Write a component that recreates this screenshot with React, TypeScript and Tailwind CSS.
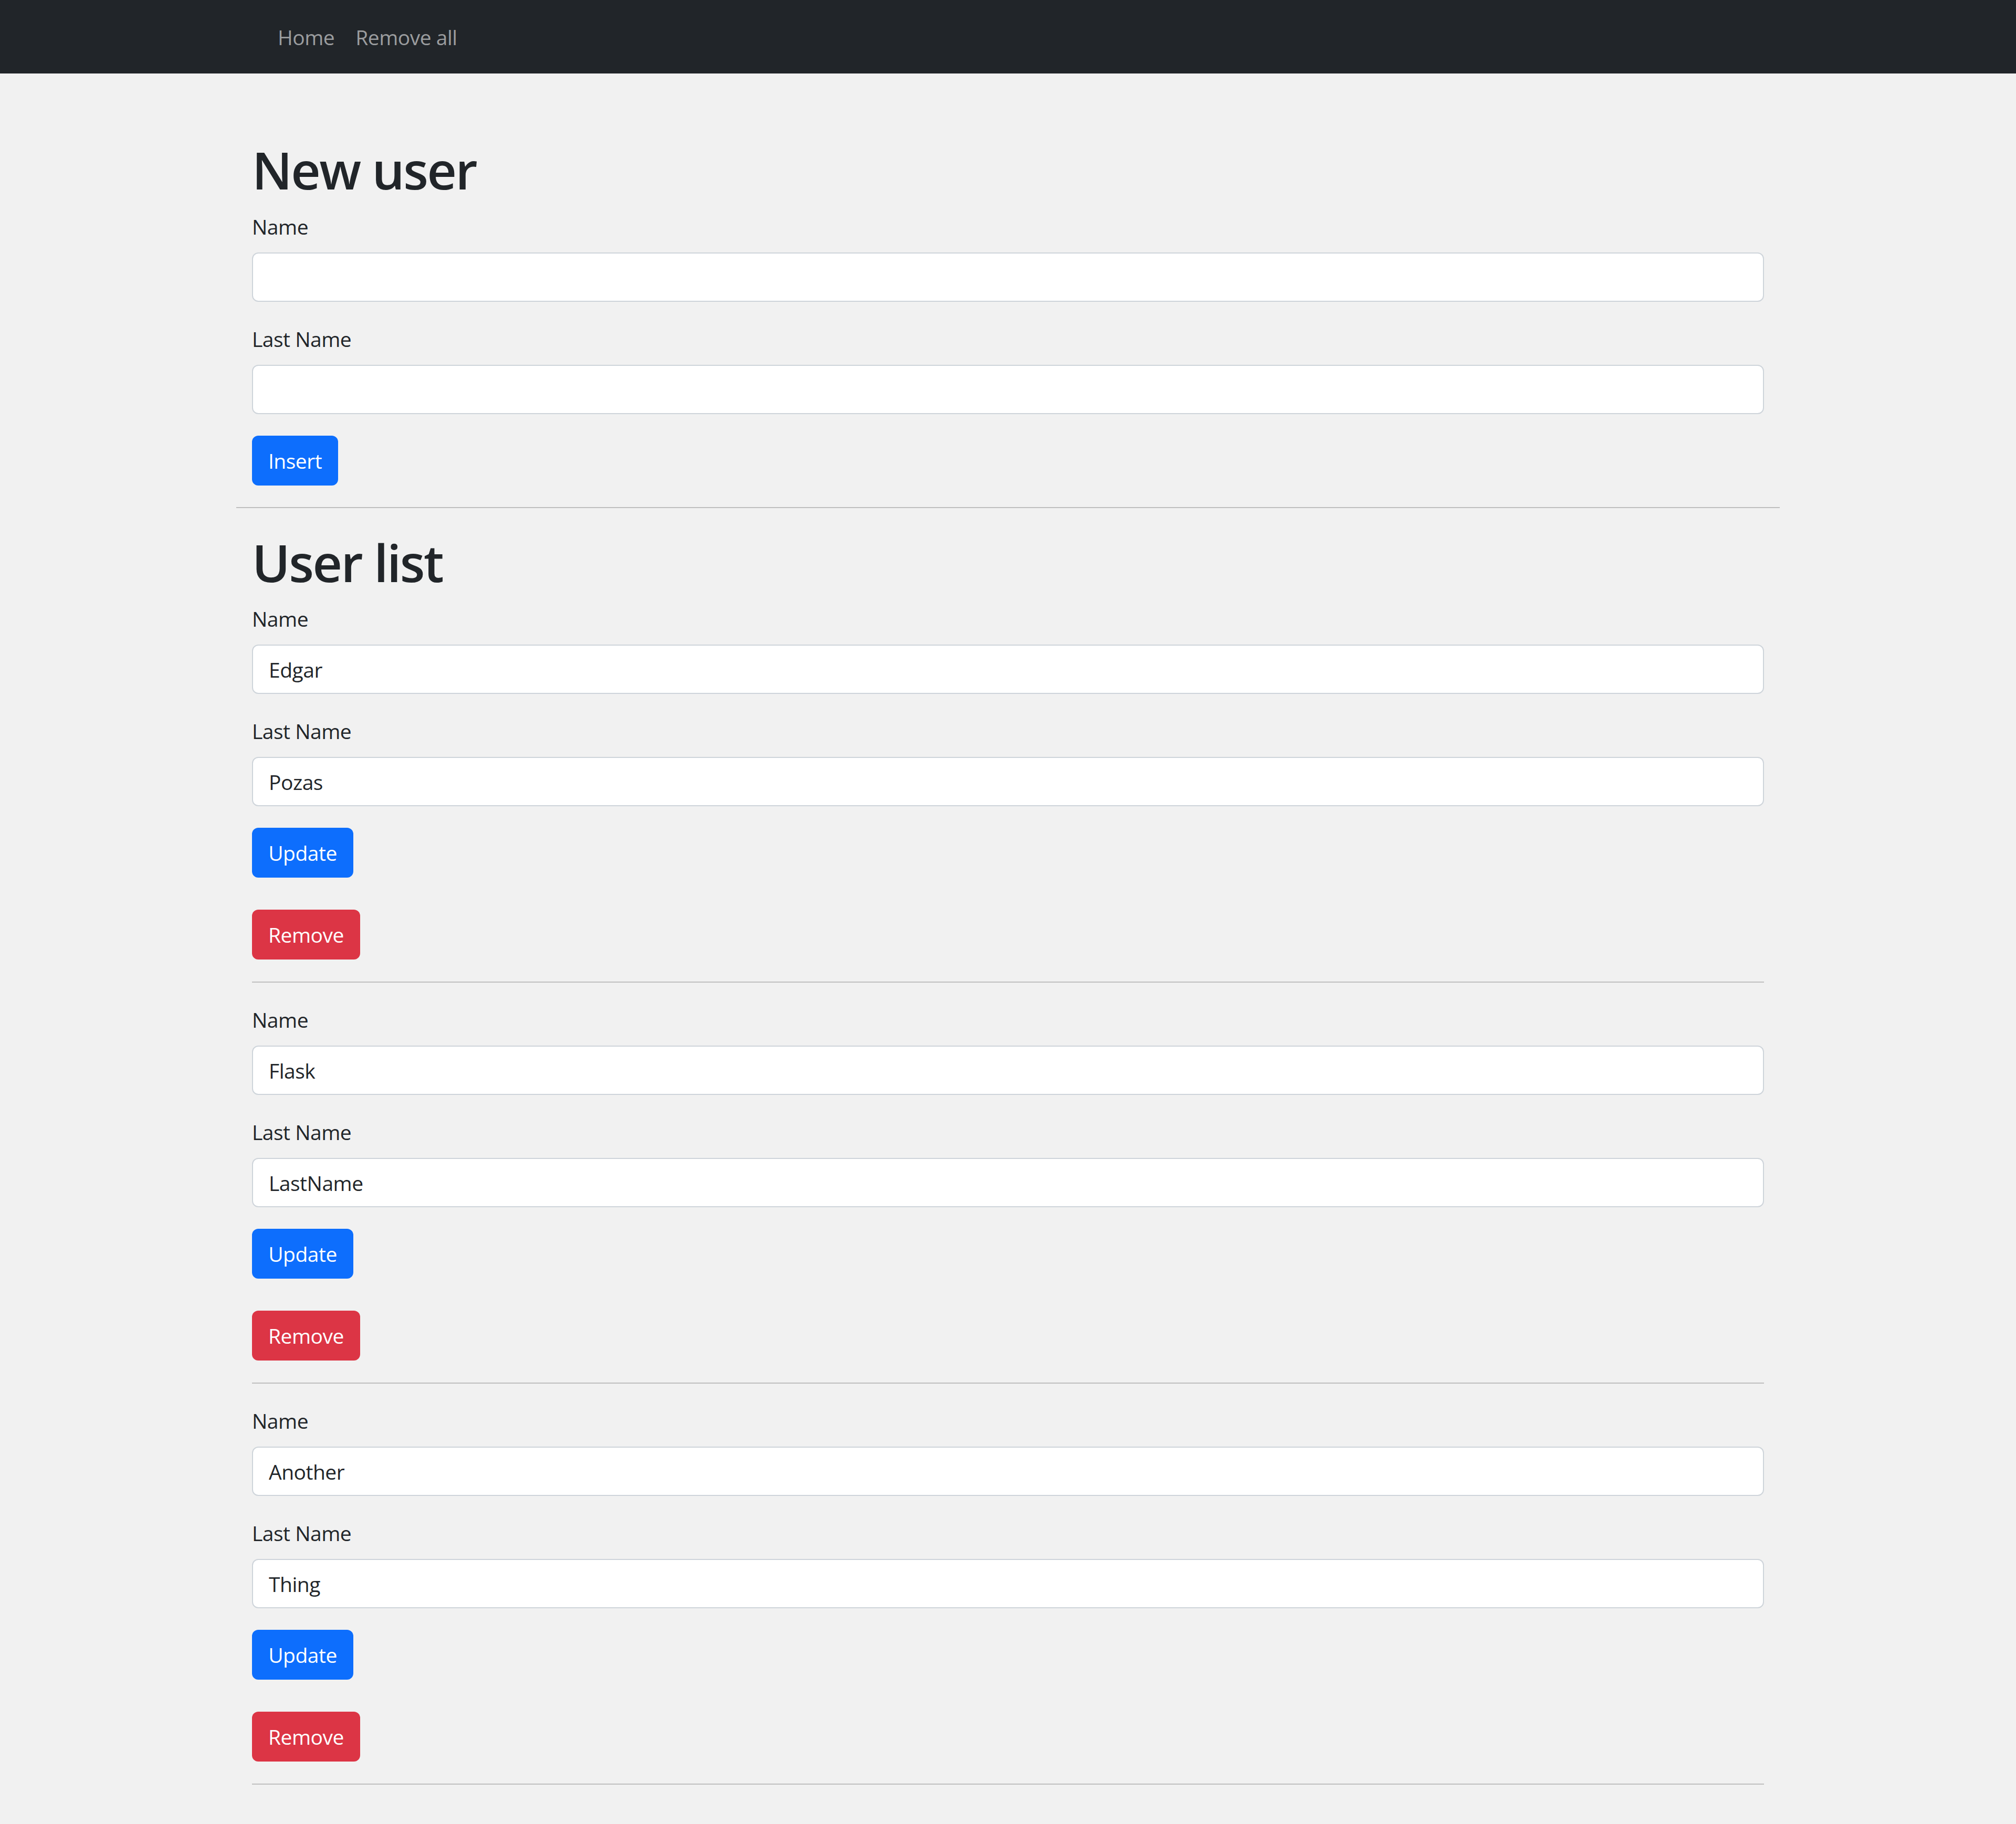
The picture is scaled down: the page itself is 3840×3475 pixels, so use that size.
import React, { useState } from "react";

type User = {
  id: number;
  name: string;
  lastName: string;
};

const initialUsers: User[] = [
  { id: 1, name: "Edgar", lastName: "Pozas" },
  { id: 2, name: "Flask", lastName: "LastName" },
  { id: 3, name: "Another", lastName: "Thing" },
];

function Field({
  label,
  value,
  onChange,
}: {
  label: string;
  value: string;
  onChange: (v: string) => void;
}) {
  return (
    <div className="mb-[41px]">
      <label className="mb-[20px] block text-[39px] leading-[59px]">{label}</label>
      <input
        type="text"
        value={value}
        onChange={(e) => onChange(e.target.value)}
        className="block h-[94px] w-full rounded-[12px] border-2 border-[#ced4da] bg-white px-[30px] text-[39px] leading-[59px] tracking-[-0.5px] text-[#212529] outline-none"
      />
    </div>
  );
}

function App() {
  const [name, setName] = useState("");
  const [lastName, setLastName] = useState("");
  const [users, setUsers] = useState<User[]>(initialUsers);

  const updateUser = (id: number, key: "name" | "lastName", v: string) => {
    setUsers((prev) => prev.map((u) => (u.id === id ? { ...u, [key]: v } : u)));
  };

  const handleInsert = () => {
    if (!name && !lastName) return;
    setUsers((prev) => [...prev, { id: Date.now(), name, lastName }]);
    setName("");
    setLastName("");
  };

  const handleRemove = (id: number) => {
    setUsers((prev) => prev.filter((u) => u.id !== id));
  };

  return (
    <div className="min-h-screen bg-[#f1f1f1] font-['Open_Sans',sans-serif] tracking-[-0.5px] text-[#212529]">
      <nav className="h-[140px] bg-[#212529]">
        <div className="mx-auto flex h-full w-[2940px] items-center pl-[59px]">
          <a href="#" className="px-[20px] text-[39px] leading-[59px] text-[#9b9d9f]">
            Home
          </a>
          <a
            href="#"
            onClick={() => setUsers([])}
            className="px-[20px] text-[39px] leading-[59px] text-[#9b9d9f]"
          >
            Remove all
          </a>
        </div>
      </nav>

      <main className="mx-auto w-[2940px] pt-[124px]">
        {/* New user form */}
        <section className="px-[30px]">
          <h1 className="mb-[20px] text-[98px] font-semibold leading-[118px] tracking-[-2.5px]">New user</h1>
          <Field label="Name" value={name} onChange={setName} />
          <Field label="Last Name" value={lastName} onChange={setLastName} />
          <button
            onClick={handleInsert}
            className="flex h-[95px] w-[164px] items-center justify-center rounded-[12px] bg-[#0d6efd] text-[39px] leading-[59px] text-white"
          >
            Insert
          </button>
        </section>

        <hr className="mt-[41px] mb-[44px] border-t-2 border-[#bfbfbf]" />

        {/* User list */}
        <section className="px-[30px]">
          <h1 className="mb-[19px] text-[98px] font-semibold leading-[118px] tracking-[-2.5px]">User list</h1>
          {users.map((u) => (
            <div key={u.id}>
              <Field label="Name" value={u.name} onChange={(v) => updateUser(u.id, "name", v)} />
              <Field
                label="Last Name"
                value={u.lastName}
                onChange={(v) => updateUser(u.id, "lastName", v)}
              />
              <button className="flex h-[95px] w-[193px] items-center justify-center rounded-[12px] bg-[#0d6efd] text-[39px] leading-[59px] text-white">
                Update
              </button>
              <button
                onClick={() => handleRemove(u.id)}
                className="mt-[61px] flex h-[95px] w-[206px] items-center justify-center rounded-[12px] bg-[#dc3545] text-[39px] leading-[59px] text-white"
              >
                Remove
              </button>
              <hr className="mt-[42px] mb-[41px] border-t-2 border-[#bfbfbf]" />
            </div>
          ))}
        </section>
      </main>
    </div>
  );
}

export default App;
